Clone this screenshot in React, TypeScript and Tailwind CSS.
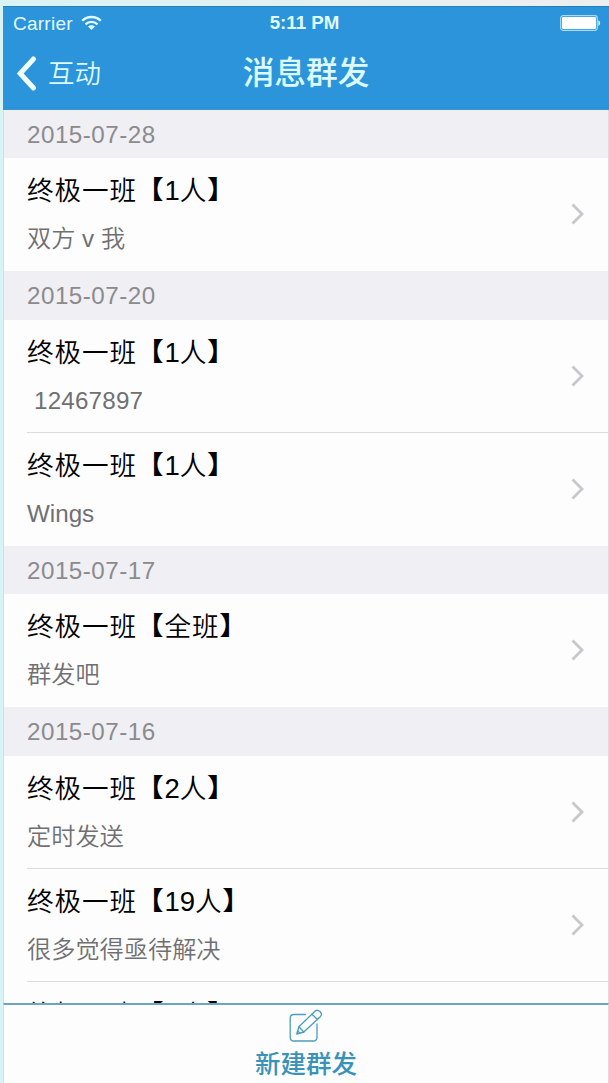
import React from "react";

type Message = { title: string; count?: string; unit: string; body: string; indent?: boolean };
type Group = { date: string; messages: Message[] };

const groups: Group[] = [
  { date: "2015-07-28", messages: [{ title: "终极一班", count: "1", unit: "人", body: "双方 v 我" }] },
  {
    date: "2015-07-20",
    messages: [
      { title: "终极一班", count: "1", unit: "人", body: "12467897", indent: true },
      { title: "终极一班", count: "1", unit: "人", body: "Wings" },
    ],
  },
  { date: "2015-07-17", messages: [{ title: "终极一班", unit: "全班", body: "群发吧" }] },
  {
    date: "2015-07-16",
    messages: [
      { title: "终极一班", count: "2", unit: "人", body: "定时发送" },
      { title: "终极一班", count: "19", unit: "人", body: "很多觉得亟待解决" },
      { title: "终极一班", count: "1", unit: "人", body: "" },
    ],
  },
];

function StatusBar() {
  return (
    <div className="grid h-[32px] shrink-0 grid-cols-3 items-center pl-[10px] pr-[8px] text-[#e2fbff]">
      <div className="flex items-center gap-[8px]">
        <span className="text-[19px] leading-none tracking-[0.25px]">Carrier</span>
        <svg width="21" height="16" viewBox="0 0 21 16" fill="none" stroke="currentColor" strokeWidth="2.3">
          <path d="M1.2 5.8C6.4.7 14.6.7 19.8 5.8" />
          <path d="M4.5 9.3c3.4-3.2 8.6-3.2 12 0" />
          <path d="M10.5 15 7 11.5c1.9-1.8 5.1-1.8 7 0Z" fill="currentColor" stroke="none" />
        </svg>
      </div>
      <span className="pr-[5px] text-center text-[18.7px] font-bold leading-none">5:11 PM</span>
      <svg className="-mt-[1px] justify-self-end" width="41" height="16" viewBox="0 0 41 16">
        <rect x=".7" y=".7" width="36.6" height="14.6" rx="2.5" fill="none" stroke="#a5dcf7" strokeWidth="1.2" />
        <rect x="2" y="2" width="34" height="12" rx="1.2" fill="#fff" />
        <path d="M38.3 5.2c2.4.6 2.4 5 0 5.6Z" fill="#d5f5ff" />
      </svg>
    </div>
  );
}

function Header() {
  return (
    <header className="flex h-[103.5px] shrink-0 flex-col border-y border-t-[#2680b8] border-b-[#3e94c8] bg-[#2b94da]">
      <StatusBar />
      <div className="grid grow grid-cols-[1fr_auto_1fr] items-center pb-[1px] text-[#dcfaff]">
        <div className="flex items-center gap-[11px] pl-[13px]">
          <svg width="21" height="35" viewBox="0 0 21 35" fill="none" stroke="#effdff" strokeWidth="5" strokeLinecap="round">
            <path d="M17.5 3 4.2 17.5 17.5 32" />
          </svg>
          <span className="pt-[2px] text-[26.5px] font-[350] leading-none">互动</span>
        </div>
        <h1 className="pt-[1px] text-[31.7px] font-medium leading-none">消息群发</h1>
      </div>
    </header>
  );
}

function MessageRow({ message, last }: { message: Message; last: boolean }) {
  return (
    <li className="h-[113.1px] pl-[23px]">
      <div className={`flex h-full items-center justify-between border-b pr-[24px] ${last ? "border-transparent" : "border-[#dcdcde]"}`}>
        <div className="flex h-full flex-col whitespace-nowrap pt-[13px]">
          <div className="flex h-[40px] text-[27.5px] font-[350] leading-[40px] text-black">
            <span className="text-[26.6px] leading-[41px] tracking-[0.9px]">{message.title}</span>
            <span className="-ml-[1px] mr-[1px] scale-y-[0.92] font-black leading-[39px]">【</span>
            <span>{message.count}</span>
            <span className="text-[26.6px] leading-[41px] tracking-[0.9px]">{message.unit}</span>
            <span className="scale-y-[0.92] font-black leading-[39px]">】</span>
          </div>
          <span className={`mt-[10px] h-[36px] text-[24.2px] font-[350] leading-[36px] text-[#707073] ${message.indent ? "pl-[7px] tracking-[0.2px]" : ""}`}>
            {message.body}
          </span>
        </div>
        <svg width="13" height="22" viewBox="0 0 13 22" fill="none" stroke="#c7c7cc" strokeWidth="2.8">
          <path d="M1.5 1.5 11 11 1.5 20.5" />
        </svg>
      </div>
    </li>
  );
}

function ComposeIcon() {
  return (
    <svg width="34" height="34" viewBox="0 0 34 34" fill="none" stroke="#4a9fba" strokeWidth="1.3" strokeLinejoin="round" strokeLinecap="round">
      <path d="M16.5 5.5H5Q1.2 5.5 1.2 9.3v18.9q0 3.8 3.8 3.8h19.2q3.8 0 3.8-3.8V15" />
      <path d="m7.7 25 2.2-7.2L26 2.2q2.2-2 4.9.4t.7 4.8L14.8 23Z" />
      <path d="m9.9 17.8 4.9 5.2M23 5.2l5.4 5.3M8.7 21.8l2.2 2.3" />
    </svg>
  );
}

export default function App() {
  return (
    <div className="flex h-[1083px] w-[609px] flex-col overflow-hidden bg-gradient-to-r from-[#d9f3f4] to-[#eeeeef] pl-[3px] pt-[6px] font-['Liberation_Sans','Noto_Sans_CJK_SC',sans-serif]">
      <div className="flex min-h-0 grow flex-col">
        <Header />
        <main className="min-h-0 grow overflow-hidden border-x border-x-[#d7dde0] bg-[#fdfdfe]">
          {groups.map((group) => (
            <section key={group.date}>
              <h2 className="flex h-[48.5px] items-center bg-[#f0eff3] pl-[23px] pt-[2px] text-[24.2px] font-normal tracking-[0.5px] text-[#8b8b8e]">
                {group.date}
              </h2>
              <ul>
                {group.messages.map((message, i) => (
                  <MessageRow key={i} message={message} last={i === group.messages.length - 1} />
                ))}
              </ul>
            </section>
          ))}
        </main>
        <footer className="flex h-[80px] shrink-0 flex-col items-center border-x border-t-2 border-x-[#dddddf] border-t-[#6ba5c0] bg-[#fdfdfe] pt-[4px]">
          <ComposeIcon />
          <span className="mt-[9px] text-[25.5px] font-medium leading-none text-[#3992b8]">新建群发</span>
        </footer>
      </div>
    </div>
  );
}
